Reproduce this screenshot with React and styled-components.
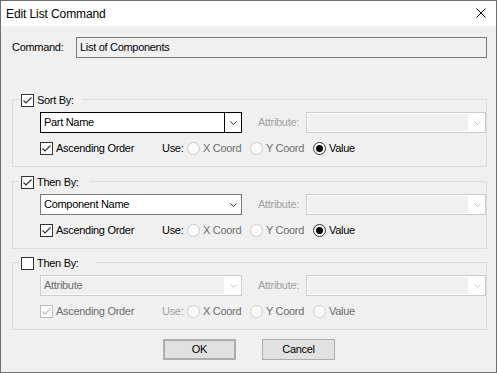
import React from 'react';
import styled, { createGlobalStyle } from 'styled-components';

const Global = createGlobalStyle`
  html, body { margin: 0; padding: 0; background: #f0f0f0; }
  * { box-sizing: border-box; }
`;

const Window = styled.div`
  width: 497px;
  height: 373px;
  border: 1px solid #707070;
  background: #f0f0f0;
  display: flex;
  flex-direction: column;
  font-family: "Liberation Sans", Arial, sans-serif;
  font-size: 11px;
  line-height: 13px;
  letter-spacing: -0.3px;
  color: #000;
  overflow: hidden;
`;

const TitleBar = styled.div`
  height: 25px;
  flex: none;
  background: #fff;
  display: flex;
  align-items: center;
  justify-content: space-between;
  padding: 0 10px 0 5px;
`;

const Title = styled.span`
  font-size: 12px;
  letter-spacing: -0.1px;
  line-height: 16px;
`;

const CloseIcon = styled.svg`
  width: 10px;
  height: 10px;
  display: block;
  margin-top: -1px;
`;

const Body = styled.div`
  flex: 1;
  display: flex;
  flex-direction: column;
  padding: 11px 9px 0 11px;
`;

const FieldRow = styled.div`
  display: flex;
  align-items: center;
  height: 21px;
`;

const FieldLabel = styled.span`
  width: ${p => p.$w}px;
  margin-left: ${p => p.$ml || 0}px;
  flex: none;
  color: ${p => p.$dim ? '#a0a0a0' : '#000'};
`;

const ReadOnlyBox = styled.div`
  flex: 1;
  height: 21px;
  border: 1px solid #7a7a7a;
  background: #f0f0f0;
  display: flex;
  align-items: center;
  padding-left: 3px;
`;

const Group = styled.div`
  margin-top: ${p => p.$mt}px;
  height: 68px;
  border: 1px solid #dcdcdc;
  display: flex;
  flex-direction: column;
`;

const Legend = styled.div`
  margin: -6px 0 0 6px;
  width: ${p => p.$w}px;
  height: 13px;
  padding-left: 2px;
  background: #f0f0f0;
  display: flex;
  align-items: center;
  gap: 3px;
`;

const ComboRow = styled.div`
  margin-top: 5px;
  padding-left: 27px;
  display: flex;
  align-items: center;
  height: 21px;
`;

const OptionRow = styled.div`
  margin-top: 9px;
  padding-left: 27px;
  display: flex;
  align-items: center;
  height: 13px;
`;

const Combo = styled.div`
  width: ${p => p.$w}px;
  height: 21px;
  flex: none;
  display: flex;
  border: 1px solid ${p => p.$state === 'focused' ? '#000' : p.$state === 'disabled' ? '#cccccc' : '#7a7a7a'};
  background: #fff;
`;

const ComboText = styled.div`
  flex: 1;
  display: flex;
  align-items: center;
  padding-left: ${p => p.$disabled ? 2 : 3}px;
  margin: ${p => p.$disabled ? '1px 0 1px 1px' : '0'};
  background: ${p => p.$disabled ? '#f0f0f0' : '#fff'};
  color: ${p => p.$disabled ? '#6d6d6d' : '#000'};
`;

const ComboButton = styled.div`
  width: 17px;
  flex: none;
  display: flex;
  align-items: center;
  justify-content: center;
  border-left: 1px solid ${p => p.$sep ? '#000' : 'transparent'};
`;

const Chevron = ({ color }) => (
  <svg width="7" height="4" viewBox="0 0 7 4" style={{ display: 'block' }}>
    <polyline points="0.5,0.5 3.5,3.5 6.5,0.5" fill="none" stroke={color} strokeWidth="1" />
  </svg>
);

const CheckItem = styled.label`
  display: flex;
  align-items: center;
  gap: 3px;
  width: ${p => p.$w ? `${p.$w}px` : 'auto'};
  flex: none;
  color: ${p => p.$dim ? '#6d6d6d' : '#000'};
`;

const Box = styled.span`
  width: 13px;
  height: 13px;
  flex: none;
  border: 1px solid ${p => p.$disabled ? '#bcbcbc' : '#333333'};
  background: #fff;
  display: flex;
  align-items: center;
  justify-content: center;
`;

const CheckBox = ({ checked, disabled }) => (
  <Box $disabled={disabled}>
    {checked && (
      <svg width="11" height="11" viewBox="0 0 11 11" style={{ display: 'block' }}>
        <polyline points="1.5,5.5 4,8 9.5,2.5" fill="none" stroke={disabled ? '#bcbcbc' : '#333'} strokeWidth="1.2" />
      </svg>
    )}
  </Box>
);

const RadioItem = styled.label`
  display: flex;
  align-items: center;
  gap: 3px;
  width: 63px;
  flex: none;
  color: ${p => p.$dim ? '#6d6d6d' : '#000'};
`;

const Circle = styled.span`
  width: 13px;
  height: 13px;
  flex: none;
  border-radius: 50%;
  border: 1px solid ${p => p.$disabled ? '#cccccc' : '#333333'};
  background: ${p => p.$disabled ? '#fafafa' : '#fff'};
  display: flex;
  align-items: center;
  justify-content: center;
`;

const Dot = styled.span`
  width: 7px;
  height: 7px;
  border-radius: 50%;
  background: #000;
`;

const Radio = ({ checked, disabled, label }) => (
  <RadioItem $dim={disabled}>
    <Circle $disabled={disabled}>{checked && <Dot />}</Circle>
    <span>{label}</span>
  </RadioItem>
);

const ButtonRow = styled.div`
  margin-top: 9px;
  display: flex;
  justify-content: center;
  gap: 26px;
  padding-right: 1px;
`;

const Button = styled.button`
  width: 73px;
  height: 21px;
  padding: 0;
  background: #e1e1e1;
  border: ${p => p.$default ? 2 : 1}px solid #adadad;
  font: inherit;
  letter-spacing: inherit;
  color: #000;
`;

const SortGroup = ({ title, legendW, mt, enabled, combo, comboState, valueChecked }) => {
  const off = !enabled;
  return (
    <Group $mt={mt}>
      <Legend $w={legendW}>
        <CheckBox checked={enabled} />
        <span>{title}</span>
      </Legend>
      <ComboRow>
        <Combo $w={202} $state={comboState}>
          <ComboText $disabled={comboState === 'disabled'}>{combo}</ComboText>
          <ComboButton $sep={comboState === 'focused'}>
            <Chevron color={comboState === 'disabled' ? '#c4c4c4' : '#333'} />
          </ComboButton>
        </Combo>
        <FieldLabel $w={48} $ml={16} $dim>Attribute:</FieldLabel>
        <Combo $w={180} $state="disabled">
          <ComboText $disabled />
          <ComboButton>
            <Chevron color="#c4c4c4" />
          </ComboButton>
        </Combo>
      </ComboRow>
      <OptionRow>
        <CheckItem $w={122} $dim={off}>
          <CheckBox checked disabled={off} />
          <span>Ascending Order</span>
        </CheckItem>
        <FieldLabel $w={25} $dim={off}>Use:</FieldLabel>
        <Radio disabled label="X Coord" />
        <Radio disabled label="Y Coord" />
        <Radio disabled={off} checked={valueChecked} label="Value" />
      </OptionRow>
    </Group>
  );
};

export default function App() {
  return (
    <>
      <Global />
      <Window>
        <TitleBar>
          <Title>Edit List Command</Title>
          <CloseIcon viewBox="0 0 10 10">
            <line x1="0.5" y1="0.5" x2="9.5" y2="9.5" stroke="#000" strokeWidth="1" />
            <line x1="9.5" y1="0.5" x2="0.5" y2="9.5" stroke="#000" strokeWidth="1" />
          </CloseIcon>
        </TitleBar>
        <Body>
          <FieldRow>
            <FieldLabel $w={64}>Command:</FieldLabel>
            <ReadOnlyBox>List of Components</ReadOnlyBox>
          </FieldRow>
          <SortGroup title="Sort By:" legendW={63} mt={41} enabled combo="Part Name" comboState="focused" valueChecked />
          <SortGroup title="Then By:" legendW={71} mt={14} enabled combo="Component Name" comboState="normal" valueChecked />
          <SortGroup title="Then By:" legendW={76} mt={13} enabled={false} combo="Attribute" comboState="disabled" valueChecked={false} />
          <ButtonRow>
            <Button $default>OK</Button>
            <Button>Cancel</Button>
          </ButtonRow>
        </Body>
      </Window>
    </>
  );
}
